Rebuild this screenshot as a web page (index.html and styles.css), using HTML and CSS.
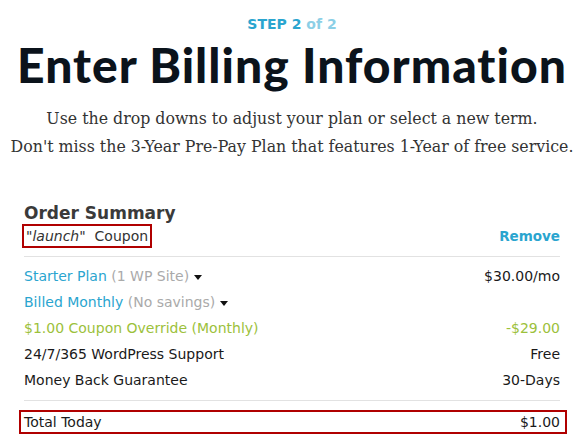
FILE: index.html
```html
<!DOCTYPE html>
<html lang="en">
<head>
  <meta charset="UTF-8">
  <meta name="viewport" content="width=device-width, initial-scale=1.0">
  <title>Enter Billing Information</title>
  <link rel="stylesheet" href="styles.css">
</head>
<body>

<div class="page">
  <div class="step"><b>STEP 2</b> of 2</div>
  <h1 class="title">Enter Billing Information</h1>
  <p class="intro">Use the drop downs to adjust your plan or select a new term.<br>Don't miss the 3-Year Pre-Pay Plan that features 1-Year of free service.</p>

  <div class="summary">
    <h2 class="summary-title">Order Summary</h2>
    <div class="coupon-row">
      <span class="coupon"><i>"launch"</i>&nbsp; Coupon</span>
      <a class="remove" href="#">Remove</a>
    </div>

    <div class="lines">
      <div class="line">
        <span class="blue">Starter Plan <span class="muted">(1 WP Site)</span> <span class="caret"></span></span>
        <span>$30.00/mo</span>
      </div>
      <div class="line">
        <span class="blue">Billed Monthly <span class="muted">(No savings)</span> <span class="caret"></span></span>
        <span></span>
      </div>
      <div class="line green">
        <span>$1.00 Coupon Override (Monthly)</span>
        <span>-$29.00</span>
      </div>
      <div class="line">
        <span>24/7/365 WordPress Support</span>
        <span>Free</span>
      </div>
      <div class="line">
        <span>Money Back Guarantee</span>
        <span>30-Days</span>
      </div>
    </div>

    <div class="total">
      <span>Total Today</span>
      <span>$1.00</span>
    </div>
  </div>
</div>

</body>
</html>
```

FILE: styles.css
```css
body {
  margin: 0;
  background-color: #fff;
  font-family: "DejaVu Sans", sans-serif;
  color: #1a1a1a;
}
.page {
  text-align: center;
  padding-top: 15px;
}
.step {
  font-size: 14px;
  font-weight: bold;
  color: #8ccfe6;
  line-height: 18px;
}
.step b {
  color: #2aa5cf;
}
.title {
  margin: 6px 0 0;
  font-family: Lato, sans-serif;
  font-size: 48px;
  font-weight: 900;
  letter-spacing: 1px;
  line-height: 52px;
  white-space: nowrap;
  color: #0b131b;
}
.intro {
  margin: 14px 0 0;
  font-family: "DejaVu Serif", serif;
  font-size: 15.8px;
  line-height: 28px;
  color: #333;
}
.summary {
  text-align: left;
  margin: 41px 24px 0;
}
.summary-title {
  margin: 0;
  font-size: 17px;
  line-height: 22px;
  color: #3a3a3a;
}
.coupon-row {
  display: flex;
  justify-content: space-between;
  align-items: center;
  padding-bottom: 8px;
  border-bottom: 1px solid #e2e2e2;
}
.coupon {
  margin-left: -2px;
  padding: 1px 2px;
  border: 2px solid #b00000;
  font-size: 14px;
  line-height: 18px;
  color: #333;
}
.remove {
  font-size: 13.5px;
  font-weight: bold;
  color: #2aa5cf;
  text-decoration: none;
}
.lines {
  padding: 6px 0 7px;
  border-bottom: 1px solid #e2e2e2;
}
.line {
  display: flex;
  justify-content: space-between;
  font-size: 14px;
  line-height: 26px;
}
.blue {
  color: #2aa5cf;
}
.muted {
  color: #aaa;
}
.green {
  color: #9cc13b;
}
.caret {
  display: inline-block;
  vertical-align: middle;
  border-left: 4px solid transparent;
  border-right: 4px solid transparent;
  border-top: 5px solid #111;
}
.total {
  display: flex;
  justify-content: space-between;
  margin: 9px -7px 0 -5px;
  padding: 1px 5px 1px 3px;
  border: 2px solid #b00000;
  font-size: 14px;
  line-height: 18px;
}
```
